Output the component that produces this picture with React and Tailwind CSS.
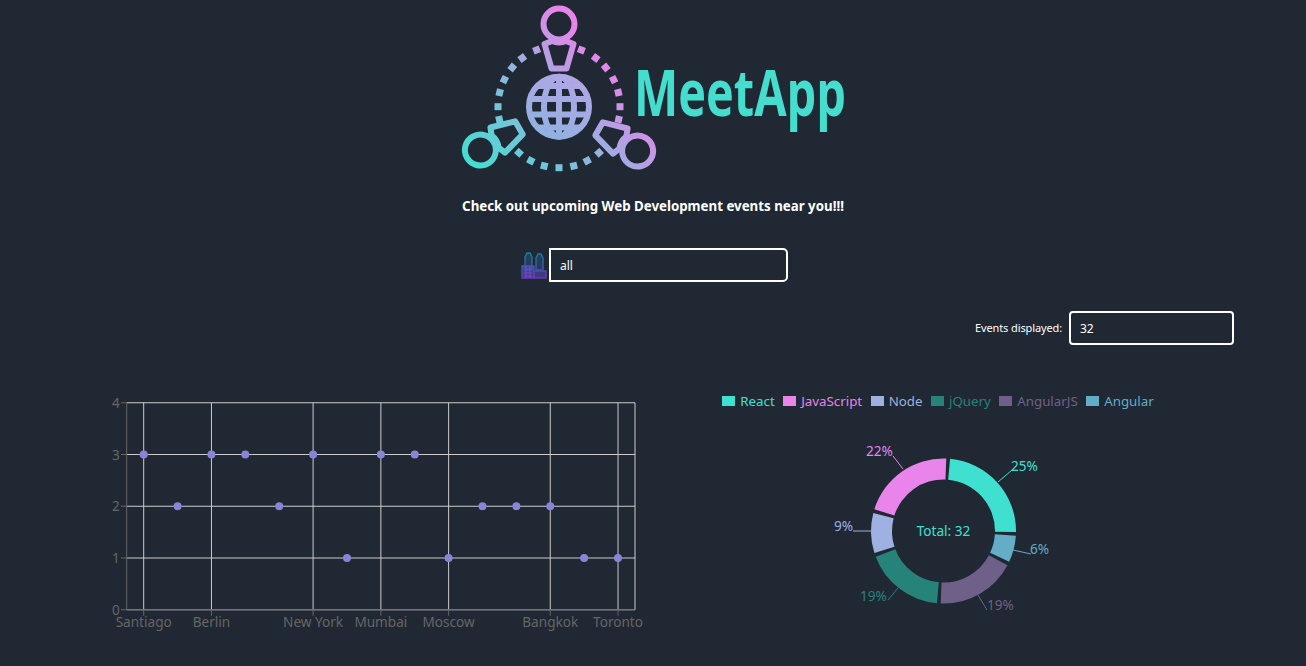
const font = { fontFamily: '"Noto Sans", "Open Sans", sans-serif' };

const points = [3, 2, 3, 3, 2, 3, 1, 3, 3, 1, 2, 2, 2, 1, 1];
const xFor = (i) => 143.7 + i * 33.88;
const xTicks = [
  { i: 0, label: 'Santiago' },
  { i: 2, label: 'Berlin' },
  { i: 5, label: 'New York' },
  { i: 7, label: 'Mumbai' },
  { i: 9, label: 'Moscow' },
  { i: 12, label: 'Bangkok' },
  { i: 14, label: 'Toronto' },
];
const yFor = (v) => 609.75 - v * 51.75;

const legend = [
  { name: 'React', color: '#40e0d0' },
  { name: 'JavaScript', color: '#e884ea' },
  { name: 'Node', color: '#9fb1e0' },
  { name: 'jQuery', color: '#26837a' },
  { name: 'AngularJS', color: '#6f6089' },
  { name: 'Angular', color: '#63aec6' },
];

const slices = [
  { color: '#40e0d0', from: 5.2, to: 90.7 },
  { color: '#63aec6', from: 93.7, to: 115.1 },
  { color: '#6f6089', from: 118.1, to: 182.2 },
  { color: '#26837a', from: 185.2, to: 249.3 },
  { color: '#9fb1e0', from: 252.3, to: 284.4 },
  { color: '#e884ea', from: 287.4, to: 362.2 },
];

const labels = [
  { text: '25%', color: '#40e0d0', x: 1011, y: 471, line: 'M998 482L1012 470' },
  { text: '6%', color: '#63aec6', x: 1030, y: 554, line: 'M1013 550L1031 554' },
  { text: '19%', color: '#6f6089', x: 987, y: 610, line: 'M978 595L987 610' },
  { text: '19%', color: '#26837a', x: 860, y: 601, line: 'M888 600L898 588' },
  { text: '9%', color: '#9fb1e0', x: 834, y: 531, line: 'M853 531L871 531' },
  { text: '22%', color: '#e884ea', x: 866, y: 456, line: 'M893 456L903 469' },
];

const polar = (r, deg) => {
  const a = (deg * Math.PI) / 180;
  return [943.5 + r * Math.sin(a), 531 - r * Math.cos(a)];
};

const slicePath = (from, to) => {
  const big = to - from > 180 ? 1 : 0;
  const [x1, y1] = polar(72.5, from);
  const [x2, y2] = polar(72.5, to);
  const [x3, y3] = polar(51.5, to);
  const [x4, y4] = polar(51.5, from);
  return `M${x1} ${y1}A72.5 72.5 0 ${big} 1 ${x2} ${y2}L${x3} ${y3}A51.5 51.5 0 ${big} 0 ${x4} ${y4}Z`;
};

const ringDots = [21.5, 37, 50, 63.6, 76.6, 90, 102, 139, 152.5, 166, 180, 194, 207.5, 221, 258, 270, 283.4, 296.4, 310, 323, 338.5];

// small square on the dashed ring, corners worked out so the gradient stays in page space
const dotPoints = (deg) => {
  const a = (deg * Math.PI) / 180;
  const cos = Math.cos(a);
  const sin = Math.sin(a);
  const cx = 559 + 61 * sin;
  const cy = 106.7 - 61 * cos;
  return [[-3.5, -3.5], [3.5, -3.5], [3.5, 3.5], [-3.5, 3.5]]
    .map(([dx, dy]) => `${cx + dx * cos - dy * sin},${cy + dx * sin + dy * cos}`)
    .join(' ');
};

function GradStops() {
  return (
    <>
      <stop offset="0" stopColor="#40e0d0" />
      <stop offset="0.53" stopColor="#9ab0e0" />
      <stop offset="0.85" stopColor="#e884ea" />
    </>
  );
}

function Person({ transform, grad }) {
  return (
    <g transform={transform} fill="none" stroke={grad} strokeWidth="6" strokeLinejoin="round">
      <circle cx="559" cy="24" r="15.5" />
      <path d="M544.5 44L552 41Q559 44 566 41L573.5 44L566.5 68.5H551.5Z" />
    </g>
  );
}

function Logo() {
  const gradProps = { gradientUnits: 'userSpaceOnUse', x1: 470, y1: 170, x2: 620, y2: 30 };
  return (
    <svg width="400" height="175" viewBox="453 0 400 175" className="block">
      <defs>
        <linearGradient id="logoGrad" {...gradProps}>
          <GradStops />
        </linearGradient>
        <linearGradient id="logoGradLeft" {...gradProps} gradientTransform="rotate(120 559 106.7) translate(7 -2)">
          <GradStops />
        </linearGradient>
        <linearGradient id="logoGradRight" {...gradProps} gradientTransform="rotate(-120 559 106.7) translate(-7 -3)">
          <GradStops />
        </linearGradient>
        <linearGradient id="globeGrad" gradientUnits="userSpaceOnUse" x1="545" y1="140" x2="575" y2="74">
          <stop offset="0" stopColor="#8fb2e0" />
          <stop offset="1" stopColor="#b3a6e6" />
        </linearGradient>
      </defs>
      <g filter="blur(0.4px)">
        {ringDots.map((deg) => (
          <polygon key={deg} points={dotPoints(deg)} fill="url(#logoGrad)" />
        ))}
        <Person grad="url(#logoGrad)" />
        <Person grad="url(#logoGradLeft)" transform="translate(-7 2) rotate(-120 559 106.7)" />
        <Person grad="url(#logoGradRight)" transform="translate(7 3) rotate(120 559 106.7)" />
        <g fill="none" stroke="url(#globeGrad)" strokeWidth="6">
          <circle cx="559" cy="106.7" r="30" />
          <ellipse cx="559" cy="106.7" rx="15" ry="30" />
          <path d="M559 76V137M531 99H587M531 114.5H587M537 86H581M537 127.5H581" />
        </g>
        <text
          x="634"
          y="116"
          fill="#45ddcd"
          fontSize="64"
          fontWeight="700"
          textLength="212"
          lengthAdjust="spacingAndGlyphs"
          style={{ fontFamily: '"Open Sans", sans-serif' }}
        >
          MeetApp
        </text>
      </g>
    </svg>
  );
}

function CityIcon() {
  return (
    <svg width="28" height="29" viewBox="0 0 28 29" className="block">
      <defs>
        <linearGradient id="cityGrad" gradientUnits="userSpaceOnUse" x1="0" y1="1" x2="0" y2="28">
          <stop offset="0" stopColor="#177f9c" />
          <stop offset="0.55" stopColor="#3b5aa8" />
          <stop offset="1" stopColor="#6a35b8" />
        </linearGradient>
      </defs>
      <g stroke="url(#cityGrad)" strokeWidth="1.4" fill="url(#cityGrad)" fillOpacity="0.35">
        <path d="M4 18V6L6 2H9L11 6V18Z" />
        <path d="M15 19V7L17 3H20L22 7V19Z" />
        <path d="M1 27V15H13V27Z" fillOpacity="0.7" />
        <path d="M13 27V20H25V27Z" fillOpacity="0.6" />
      </g>
      <path d="M3 19H11M3 22H11M3 25H11M5 15V27M9 15V27" stroke="#7c4fd0" strokeWidth="0.8" />
    </svg>
  );
}

function ScatterPlot() {
  return (
    <svg width="653" height="250" viewBox="0 390 653 250" className="block shrink-0">
      {[0, 1, 2, 3, 4].map((v) => (
        <g key={v}>
          <path d={`M126.7 ${yFor(v)}H635`} stroke="#ccc" />
          <path d={`M121 ${yFor(v)}H126.7`} stroke="#666" />
          <text x="116" y={yFor(v) + 5} textAnchor="middle" fontSize="13.6" fill="#666">{v}</text>
        </g>
      ))}
      <path d="M635 402.75V609.75" stroke="#ccc" />
      {xTicks.map((t) => (
        <g key={t.label}>
          <path d={`M${xFor(t.i)} 402.75V609.75`} stroke="#ccc" />
          <path d={`M${xFor(t.i)} 609.75V615.75`} stroke="#666" />
          <text x={xFor(t.i)} y="627" textAnchor="middle" fontSize="13.6" fill="#666">{t.label}</text>
        </g>
      ))}
      <path d="M126.7 402.75V609.75H635" stroke="#666" fill="none" />
      {points.map((v, i) => (
        <circle key={i} cx={xFor(i)} cy={yFor(v)} r="4" fill="#8884d8" />
      ))}
    </svg>
  );
}

function Donut() {
  return (
    <svg width="653" height="200" viewBox="653 435 653 200" className="block">
      {slices.map((s) => (
        <path key={s.color} d={slicePath(s.from, s.to)} fill={s.color} />
      ))}
      {labels.map((l) => (
        <g key={l.line}>
          <path d={l.line} stroke={l.color} fill="none" />
          <text x={l.x} y={l.y} fontSize="13.6" fill={l.color}>{l.text}</text>
        </g>
      ))}
      <text x="943.5" y="536" textAnchor="middle" fontSize="13.6" fill="#40e0d0">Total: 32</text>
    </svg>
  );
}

export default function App() {
  return (
    <div className="min-h-screen bg-[#202833] overflow-hidden text-white" style={font}>
      <div className="flex justify-center">
        <Logo />
      </div>

      <h1 className="mt-[21px] text-center text-[13.3px] leading-5 font-bold">
        Check out upcoming Web Development events near you!!!
      </h1>

      <div className="mt-[32px] flex items-center justify-center pl-[3px]">
        <CityIcon />
        <input
          readOnly
          value="all"
          className="w-[239px] h-[34px] border-2 border-white rounded-r-[5px] bg-transparent px-[9px] text-xs outline-none"
        />
      </div>

      <div className="mt-[29px] flex items-center justify-end gap-[7px] pr-[72px]">
        <span className="text-[11px] tracking-[-0.12px]">Events displayed:</span>
        <input
          readOnly
          value="32"
          className="w-[165px] h-[34px] border-2 border-white rounded-[4px] bg-transparent px-[9px] text-xs outline-none"
        />
      </div>

      <div className="mt-[45px] flex items-start">
        <ScatterPlot />
        <div className="flex-1">
          <ul className="flex justify-center gap-[8.5px] pr-[83px] pt-px text-[13.3px] leading-5 h-[45px]">
            {legend.map((item) => (
              <li key={item.name} className="flex items-center gap-[5px] h-[20px]" style={{ color: item.color }}>
                <span className="w-[13px] h-[10px] inline-block" style={{ backgroundColor: item.color }} />
                {item.name}
              </li>
            ))}
          </ul>
          <Donut />
        </div>
      </div>
    </div>
  );
}
